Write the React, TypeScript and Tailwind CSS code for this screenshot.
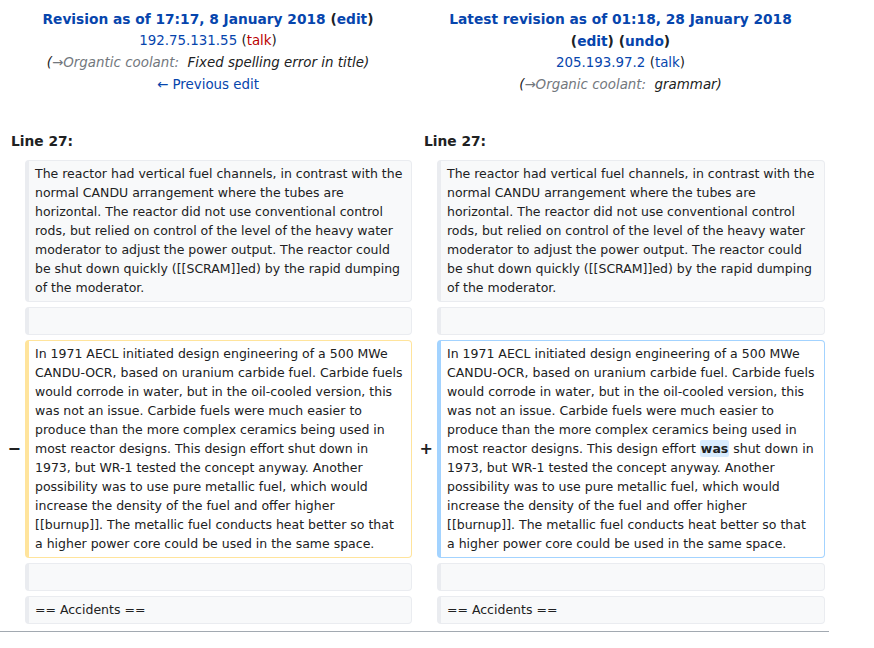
import React from 'react';

const font = { fontFamily: '"DejaVu Sans", sans-serif' };

const Context: React.FC<{ children?: React.ReactNode }> = ({ children }) => (
  <div className="bg-[#f8f9fa] border border-[#eaecf0] border-l-4 rounded-[4px] px-[6px] pt-[3px] pb-[4px] text-[12.5px] leading-[19px] text-[#202122] min-h-[28px]">
    {children}
  </div>
);

const Link: React.FC<{ children: React.ReactNode; red?: boolean }> = ({ children, red }) => (
  <a className={red ? 'text-[#ba0000]' : 'text-[#0645ad]'}>{children}</a>
);

const removed =
  'In 1971 AECL initiated design engineering of a 500 MWe CANDU-OCR, based on uranium carbide fuel. Carbide fuels would corrode in water, but in the oil-cooled version, this was not an issue. Carbide fuels were much easier to produce than the more complex ceramics being used in most reactor designs. This design effort shut down in 1973, but WR-1 tested the concept anyway. Another possibility was to use pure metallic fuel, which would increase the density of the fuel and offer higher [[burnup]]. The metallic fuel conducts heat better so that a higher power core could be used in the same space.';

const reactor =
  'The reactor had vertical fuel channels, in contrast with the normal CANDU arrangement where the tubes are horizontal. The reactor did not use conventional control rods, but relied on control of the level of the heavy water moderator to adjust the power output. The reactor could be shut down quickly ([[SCRAM]]ed) by the rapid dumping of the moderator.';

const App: React.FC = () => {
  return (
    <div className="bg-white min-h-screen text-[#202122]" style={font}>
      <div className="grid grid-cols-[17px_387px_17px_388px] gap-x-[4px] gap-y-[5px] p-[4px] w-[829px]">
        {/* Header */}
        <div className="col-span-2 text-center text-[13.4px] leading-[22px] pt-[4px]">
          <div className="font-bold text-[13.75px]">
            <Link>Revision as of 17:17, 8 January 2018</Link> (<Link>edit</Link>)
          </div>
          <div>
            <Link>192.75.131.55</Link> (<Link red>talk</Link>)
          </div>
          <div className="italic">
            (<span className="text-[#72777d]">→Organtic coolant:</span>&nbsp; Fixed spelling error in title)
          </div>
          <div>
            <Link>← Previous edit</Link>
          </div>
        </div>
        <div className="col-span-2 text-center text-[13.4px] leading-[22px] pt-[4px]">
          <div className="font-bold text-[13.75px]">
            <Link>Latest revision as of 01:18, 28 January 2018</Link>
          </div>
          <div className="font-bold text-[13.75px]">
            (<Link>edit</Link>) (<Link>undo</Link>)
          </div>
          <div>
            <Link>205.193.97.2</Link> (<Link>talk</Link>)
          </div>
          <div className="italic">
            (<span className="text-[#72777d]">→Organic coolant:</span>&nbsp; grammar)
          </div>
        </div>

        {/* Line numbers */}
        <div className="col-span-2 pl-[7px] pt-[29px] pb-[3px] text-[13.75px] leading-[22px] font-bold">Line 27:</div>
        <div className="col-span-2 pl-[8px] pt-[29px] pb-[3px] text-[13.75px] leading-[22px] font-bold">Line 27:</div>

        {/* Context */}
        <div />
        <Context>{reactor}</Context>
        <div />
        <Context>{reactor}</Context>

        <div />
        <Context />
        <div />
        <Context />

        {/* Changed paragraph */}
        <div className="flex items-center justify-end font-bold text-[16px]">−</div>
        <div className="border border-[#ffe49c] border-l-4 rounded-[4px] px-[6px] pt-[3px] pb-[4px] text-[12.5px] leading-[19px]">
          {removed}
        </div>
        <div className="flex items-center justify-end font-bold text-[16px]">+</div>
        <div className="border border-[#a3d3ff] border-l-4 rounded-[4px] pl-[6px] pr-[8px] pt-[3px] pb-[4px] text-[12.5px] leading-[19px]">
          In 1971 AECL initiated design engineering of a 500 MWe CANDU-OCR, based on uranium carbide fuel. Carbide fuels
          would corrode in water, but in the oil-cooled version, this was not an issue. Carbide fuels were much easier to
          produce than the more complex ceramics being used in most reactor designs. This design effort{' '}
          <span className="bg-[#d8ecff] font-bold rounded-[2px] px-[1px] py-[1px]">was</span> shut down in 1973, but WR-1 tested the
          concept anyway. Another possibility was to use pure metallic fuel, which would increase the density of the fuel
          and offer higher [[burnup]]. The metallic fuel conducts heat better so that a higher power core could be used in
          the same space.
        </div>

        <div />
        <Context />
        <div />
        <Context />

        <div />
        <Context>== Accidents ==</Context>
        <div />
        <Context>== Accidents ==</Context>
      </div>
      <div className="w-[829px] h-px bg-[#a2a9b1] mt-[3px]" />
    </div>
  );
};

export default App;
